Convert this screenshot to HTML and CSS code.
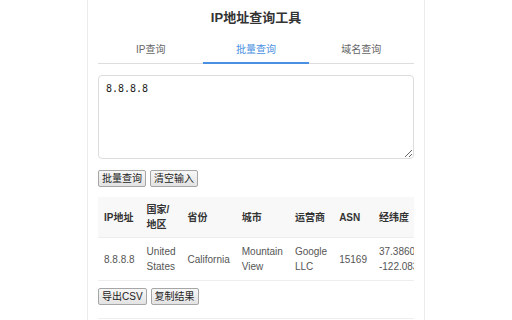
FILE: index.html
```html
<!DOCTYPE html>
<html lang="zh-CN">
<head>
    <meta charset="UTF-8">
    <meta name="viewport" content="width=device-width, initial-scale=1.0">
    <title>IP地址查询工具</title>
    <link rel="stylesheet" href="styles.css">
</head>
<body>
    <div class="container">
        <h2 class="title">IP地址查询工具</h2>

        <div class="tabs">
            <div class="tab">IP查询</div>
            <div class="tab active">批量查询</div>
            <div class="tab">域名查询</div>
        </div>

        <textarea class="ip-input" id="batch-input">8.8.8.8</textarea>

        <div class="btn-row">
            <button class="plain-btn">批量查询</button>
            <button class="plain-btn">清空输入</button>
        </div>

        <div class="table-wrap">
            <table class="result-table">
                <thead>
                    <tr>
                        <th>IP地址</th>
                        <th>国家/地区</th>
                        <th>省份</th>
                        <th>城市</th>
                        <th>运营商</th>
                        <th>ASN</th>
                        <th>经纬度</th>
                    </tr>
                </thead>
                <tbody>
                    <tr>
                        <td>8.8.8.8</td>
                        <td>United States</td>
                        <td>California</td>
                        <td>Mountain View</td>
                        <td>Google LLC</td>
                        <td>15169</td>
                        <td>37.3860, -122.0838</td>
                    </tr>
                </tbody>
            </table>
        </div>

        <div class="btn-row export-row">
            <button class="plain-btn">导出CSV</button>
            <button class="plain-btn">复制结果</button>
        </div>

        <div class="history"></div>
    </div>
</body>
</html>
```

FILE: styles.css
```css
body {
    font-family: "Liberation Sans", "Noto Sans CJK SC", sans-serif;
    margin: 0;
    padding: 0;
    background: #fff;
    color: #333;
    height: 320px;
    overflow: hidden;
}
.container {
    width: 316px;
    margin: 0 auto;
    padding: 9px 10px 0;
    border-left: 1px solid #ececec;
    border-right: 1px solid #ececec;
    height: 311px;
}
.title {
    font-size: 13px;
    line-height: 18px;
    text-align: center;
    margin: 0;
    color: #333;
}
.tabs {
    display: flex;
    margin-top: 8px;
    border-bottom: 1px solid #ddd;
}
.tab {
    flex: 1;
    text-align: center;
    font-size: 10px;
    line-height: 14px;
    padding: 8px 0 5px;
    color: #666;
    border-bottom: 2px solid transparent;
    margin-bottom: -1px;
}
.tab.active {
    color: #4a90e2;
    border-bottom-color: #4a90e2;
}
.ip-input {
    display: block;
    box-sizing: border-box;
    width: 100%;
    height: 84px;
    margin-top: 11px;
    padding: 6px 7px;
    border: 1px solid #ddd;
    border-radius: 4px;
    font-family: "DejaVu Sans Mono", monospace;
    font-size: 10px;
    line-height: 14px;
    color: #222;
}
.btn-row {
    display: flex;
    gap: 4px;
    margin-top: 11px;
}
.plain-btn {
    font-family: "Liberation Sans", "Noto Sans CJK SC", sans-serif;
    font-size: 10px;
    line-height: 13px;
    padding: 1px 3px;
    color: #222;
    background: linear-gradient(#f7f7f7, #e3e3e3);
    border: 1px solid #a6a6a6;
    border-radius: 2px;
}
.table-wrap {
    margin-top: 10px;
    overflow: hidden;
}
.result-table {
    width: 100%;
    border-collapse: collapse;
    font-size: 10px;
    line-height: 15px;
}
.result-table th,
.result-table td {
    text-align: left;
    padding: 5px 6px;
    border-bottom: 1px solid #eee;
}
.result-table th {
    background: #f8f8f8;
    font-weight: 600;
    color: #333;
}
.result-table td {
    padding: 6px 6px;
    color: #555;
}
.export-row {
    margin-top: 7px;
}
.history {
    margin-top: 13px;
    border-top: 1px solid #eee;
}
```
